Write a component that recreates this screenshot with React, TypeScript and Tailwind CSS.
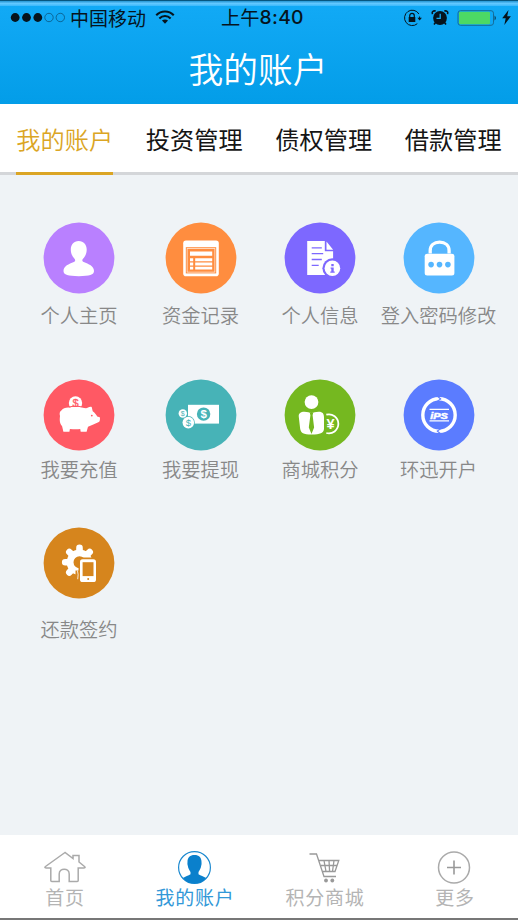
import type { ReactNode } from "react";

const tabs = ["我的账户", "投资管理", "债权管理", "借款管理"];

function Badge({ color, children }: { color: string; children: ReactNode }) {
  return (
    <svg className="h-[72px] w-[72px] shrink-0" viewBox="-36 -36 72 72" fill="#fff">
      <circle r="35.4" fill={color} />
      {children}
    </svg>
  );
}

function Coin({ x, y, r, color, size }: { x: number; y: number; r: number; color: string; size: number }) {
  return (
    <>
      <circle cx={x} cy={y} r={r} />
      <text x={x} y={y + size * 0.36} fill={color} fontSize={size} textAnchor="middle" fontFamily="Liberation Sans, sans-serif">
        $
      </text>
    </>
  );
}

const items: { label: string; icon: ReactNode }[] = [
  {
    label: "个人主页",
    icon: (
      <Badge color="#b980ff">
        <path d="M-.3-17c5 0 8 3.600 8 8.600 0 4-1.500 7-3.700 9.100-1.100 1.100-.9 2.600.7 3.400 4.800 2 10.300 3.900 10.300 9 0 3.800-4.500 5.100-15.200 5.100s-15.300-1.300-15.300-5.100c0-5.100 5.500-7 10.300-9 1.600-.8 1.800-2.300.7-3.400C-6.700-1.400-8.200-4.400-8.200-8.400c0-5 2.900-8.600 7.900-8.600z" />
      </Badge>
    ),
  },
  {
    label: "资金记录",
    icon: (
      <Badge color="#ff8d3f">
        <rect x="-17.800" y="-17.500" width="35.600" height="35.700" rx="2.800" />
        <path fill="#ff8d3f" d="M-15.200-10.800h30.400v26.200h-30.400z" />
        <path d="M-14.200-9.800h28.400v24.200h-28.400z" />
        <path fill="#ff8d3f" d="M-13.600-9.200h27.200v23h-27.200z" />
        <path d="M-11-6.500h22.200v4.200H-11zM-11 .3h3.200v2.900H-11zM-5.800.3h17v2.900h-17zM-11 4.600h3.200v2.800H-11zM-5.800 4.600h17v2.800h-17zM-11 8.800h3.200v2.700H-11zM-5.800 8.800h17v2.700h-17z" />
      </Badge>
    ),
  },
  {
    label: "个人信息",
    icon: (
      <Badge color="#7d68ff">
        <path d="M-12.800-17H4.800v10.300h8.300V17h-25.900z" />
        <path d="M6.500-16.600l6.600 8.300H6.500z" />
        <path d="M-8.300-10.200H1.800M-8.300-4.300H3.200M-8.300 1.500H1.800M-8.300 7.300h7" stroke="#7d68ff" strokeWidth="1.300" />
        <circle cx="12.400" cy="10.200" r="10" fill="#7d68ff" />
        <circle cx="12.400" cy="10.200" r="7.800" />
        <path fill="#7d68ff" d="M11.300 6h2.400v2.200h-2.400zM10.600 9.400h3.100v4h1v1.400h-4.400v-1.400h1v-2.600h-.7z" />
      </Badge>
    ),
  },
  {
    label: "登入密码修改",
    icon: (
      <Badge color="#55b6ff">
        <rect x="-14.300" y="-4.200" width="29.700" height="21.600" rx="2.500" />
        <path d="M-8.800-4.500v-2.700C-8.800-12.500-5-15.800.6-15.800s9.500 3.300 9.500 8.600v2.700" fill="none" stroke="#fff" strokeWidth="3.300" />
        <g fill="#55b6ff">
          <circle cx="-7.900" cy="6.600" r="2.800" />
          <circle cx=".5" cy="6.600" r="2.800" />
          <circle cx="8.900" cy="6.600" r="2.800" />
        </g>
      </Badge>
    ),
  },
  {
    label: "我要充值",
    icon: (
      <Badge color="#ff5964">
        <circle cx="-3.500" cy="-12" r="6.700" />
        <text x="-3.500" y="-8.200" fill="#ff5964" stroke="#ff5964" strokeWidth=".3" fontSize="11" textAnchor="middle" fontFamily="Liberation Sans, sans-serif">$</text>
        <path d="M-11-5.800q7.500-2.300 15.500 0" fill="none" stroke="#ff5964" strokeWidth="1.200" transform="translate(0 -1.800)" />
        <path d="M-17.900-4.200c2-2.600 5-3.500 8.600-3.100 3.300-.9 8.300-.9 12.200-.1C5.500-7 7.500-6.300 9-7.400c1.600-1 2.700-1 3.700-.6l1 4.300c2.300 1.800 3.800 3.600 4.500 5.200l2.600.7c.5 2.100 0 4.600-1.500 5.100-3.300 1.300-6.600 3-10.300 4.500L7.600 16.800H1.700l-.5-2.700c-3.200.4-6.800.3-10.300-.2l-.5 2.900h-6l-1.300-5.500c-2.500-3.200-2.600-6-2.100-10.300-.7-2.300-.3-4.800 1.100-5.200z" />
        <circle cx="12.800" cy=".6" r=".9" fill="#ff5964" />
      </Badge>
    ),
  },
  {
    label: "我要提现",
    icon: (
      <Badge color="#47b3b7">
        <path d="M-13-10.200h31v18.800h-31z" />
        <circle cx="2.600" cy="-.9" r="6.700" fill="#47b3b7" />
        <text x="2.600" y="3" fontSize="11.500" fontWeight="700" textAnchor="middle" fontFamily="Liberation Sans, sans-serif">$</text>
        <circle cx="-12.700" cy="7.600" r="6.500" fill="#47b3b7" />
        <Coin x={-18.200} y={-1.500} r={4.200} color="#47b3b7" size={7} />
        <Coin x={-12.700} y={7.600} r={5.800} color="#47b3b7" size={9.500} />
      </Badge>
    ),
  },
  {
    label: "商城积分",
    icon: (
      <Badge color="#75b820">
        <circle cx="-8.500" cy="-12.900" r="6.900" />
        <path d="M-15.700-3.300c3.500 0 5 1.200 7.200 1.200s3.700-1.200 7.200-1.200C3-3.300 4-1 4 2.500v11.300c-.2 4.300-4 5.700-12.300 5.700-8.700 0-10.700-1.600-11.500-5.500L-21.200 2c-.5-3.800 2-5.300 5.500-5.300z" />
        <path fill="#75b820" d="M-10.200-2.200h3.400l-.6 2.500 1.500 12.200-2.600 6.400-2.700-6.400 1.600-12.200z" />
        <path d="M6.300-.3A9.500 9.500 0 1 1 6.300 18" fill="none" stroke="#fff" strokeWidth="1.800" />
        <text x="10.500" y="14.200" fontSize="14.500" fontWeight="700" textAnchor="middle" fontFamily="Liberation Sans, sans-serif">¥</text>
      </Badge>
    ),
  },
  {
    label: "环迅开户",
    icon: (
      <Badge color="#5b7cff">
        <circle r="16.200" fill="none" stroke="#fff" strokeWidth="3.400" />
        <path d="M-1.800-19l3.500 3-4 2.600M1.800 19l-3.500-3 4-2.600" fill="none" stroke="#5b7cff" strokeWidth="1.100" />
        <path d="M-9.500-5.600H10M-9.500 5.900H10" stroke="#fff" strokeWidth="1.200" />
        <text x="-8.800" y="3.500" fontSize="9.700" fontWeight="700" fontStyle="italic" stroke="#fff" strokeWidth=".5" textLength="17.600" lengthAdjust="spacingAndGlyphs" fontFamily="Liberation Sans, sans-serif">iPS</text>
      </Badge>
    ),
  },
  {
    label: "还款签约",
    icon: (
      <Badge color="#d6851d">
        <g transform="translate(.5 -.8)">
          <path d="M0-12v-2.300M0 12v2.300M-12 0h-2.300M-8.500-8.500l-1.700-1.700M8.500-8.500l1.700-1.700M-8.500 8.500l-1.700 1.700" stroke="#fff" strokeWidth="6.600" strokeLinecap="round" />
          <circle r="9.400" fill="none" stroke="#fff" strokeWidth="6.800" />
        </g>
        <path fill="#d6851d" d="M-.5 0c0-4 1.500-5.500 5.500-5.500h15V22H-.5z" />
        <path d="M-3.500 7.500v14h6v-14z" fill="#d6851d" />
        <path d="M-1.600 7.500q1.300 4 .3 8.700" fill="none" stroke="#fff" strokeWidth=".8" />
        <rect x="1" y="-3.800" width="16" height="22.800" rx="2.600" />
        <path fill="#d6851d" d="M3.600-.8h10.900v13.900H3.600z" />
        <circle cx="9.200" cy="16" r="1" fill="#d6851d" />
      </Badge>
    ),
  },
];

const navItems: { label: string; active?: boolean; icon: ReactNode }[] = [
  {
    label: "首页",
    icon: (
      <path d="M21 1.500L1.500 15.500q-1.500 1.500 1 1.500h4.300v12.500q0 1 1 1h7.400V23c0-6.500 10-6.500 10 0v7.500h8q1 0 1-1V17h5.300q2.500 0 1-1.500L35 11V4.500h-6v3z" stroke="#aaa" strokeWidth="1.500" />
    ),
  },
  {
    label: "我的账户",
    active: true,
    icon: (
      <>
        <circle cx="20.500" cy="16.500" r="15.900" stroke="#1a88cf" strokeWidth="1.200" />
        <path d="M20.500 4c4.500 0 7 2.500 7 6.700 0 1.500.3 2-.3 4-.4 3-1.700 4.500-2.700 6.300v2.200c2.200 1.500 5 2.200 7.700 3.800-3.200 4-7.200 5.500-11.700 5.500S12 31 8.800 27c2.700-1.600 5.500-2.300 7.700-3.800V21c-1-1.800-2.300-3.300-2.700-6.300-.6-2-.3-2.500-.3-4 0-4.200 2.500-6.700 7-6.700z" fill="#0a80cc" />
      </>
    ),
  },
  {
    label: "积分商城",
    icon: (
      <g stroke="#999" strokeWidth="1.300">
        <path d="M5.500 3h7l7.500 22.500h12M14.800 9.500h20L31 20.500H18.500M17 14.500h16M20 9.500l2 11M25 9.500l.6 11M30 9.500l-1.500 11" />
        <circle cx="22" cy="29.500" r="1.900" fill="#999" stroke="none" />
        <circle cx="28.300" cy="29.500" r="1.900" fill="#999" stroke="none" />
      </g>
    ),
  },
  {
    label: "更多",
    icon: (
      <>
        <circle cx="20" cy="16.500" r="15.500" stroke="#aaa" strokeWidth="1.500" />
        <path d="M20 9.500v14M13 16.500h14" stroke="#999" strokeWidth="1.600" />
      </>
    ),
  },
];

function StatusBar() {
  return (
    <div className="grid h-[34px] grid-cols-[221px_1fr_auto] items-center pr-[7px] text-[19px] leading-none text-[#06141d]">
      <div className="-mt-[2px] flex items-center pl-[10px]">
        <svg className="mr-[4px] h-[11px] w-[56px]" viewBox="0 0 56 11" fill="#06141d">
          <circle cx="5.200" cy="5.500" r="4.400" />
          <circle cx="16.500" cy="5.500" r="4.400" />
          <circle cx="27.800" cy="5.500" r="4.400" />
          <g fill="none" stroke="#0a4a70" strokeWidth=".7">
            <circle cx="39" cy="5.500" r="4.200" />
            <circle cx="50.300" cy="5.500" r="4.200" />
          </g>
        </svg>
        <span>中国移动</span>
        <svg className="ml-[9px] h-[16px] w-[20px]" viewBox="0 0 21 16" fill="none" stroke="#06141d" strokeWidth="2.200">
          <path d="M1.300 6.200c5.200-5.300 13.200-5.300 18.400 0M4.600 9.500c3.300-3.300 8.500-3.300 11.800 0" />
          <path d="M10.500 15l-3.200-3.200c1.800-1.600 4.600-1.600 6.400 0z" fill="#06141d" stroke="none" />
        </svg>
      </div>
      <div className="flex items-center">
        <span className="text-[19.3px]">上午</span>
        <span className="font-[Inter,sans-serif] text-[19.3px] font-medium tracking-[0.3px]">8:40</span>
      </div>
      <div className="-mt-[1px] flex items-center">
        <svg className="h-[18px] w-[19px]" viewBox="0 0 19 18" fill="none" stroke="#06141d">
          <path d="M15.900 5A7.700 7.700 0 1 0 14.300 14.700M16.600 7.500v1.500" strokeWidth="1" />
          <path d="M14.400 8.700h4.500l-2.300 2.800z" fill="#06141d" stroke="none" />
          <path d="M6.700 8V6.700c0-3 4.600-3 4.600 0V8" strokeWidth="1.200" />
          <path d="M5.700 8h6.600v5H5.700z" fill="#06141d" stroke="none" />
        </svg>
        <svg className="ml-[9px] h-[17px] w-[18px]" viewBox="0 0 18 17" fill="#06141d">
          <circle cx="9" cy="9" r="6.900" />
          <path d="M1.600 5.200C.5 3 2.200 1.400 4.700 2M16.400 5.200c1.100-2.200-.6-3.800-3.100-3.200M4.500 13.500L3 15.500M13.500 13.500l1.500 2" fill="none" stroke="#06141d" strokeWidth="1.600" />
          <path d="M9.200 4.800v4.500H5.500" fill="none" stroke="#16aaf2" strokeWidth="1.300" />
        </svg>
        <svg className="ml-[8px] h-[16px] w-[40px]" viewBox="0 0 40 16">
          <rect x="1" y=".7" width="35.500" height="14.600" rx="2.500" fill="none" stroke="#176b97" strokeWidth="1" />
          <rect x="2" y="1.700" width="31" height="12.600" rx="1.200" fill="#4cd964" />
          <path d="M37.700 5.500q1.900 2.500 0 5z" fill="#06141d" />
        </svg>
        <svg className="ml-[5px] h-[15px] w-[9px]" viewBox="0 0 9 15" fill="#06141d">
          <path d="M6.500 0L.2 8.300h3.500L2.300 15 8.900 6.200H5.200z" />
        </svg>
      </div>
    </div>
  );
}

export default function App() {
  return (
    <div className="flex h-[920px] w-[518px] flex-col overflow-hidden bg-[#eff3f6] font-['Noto_Sans_CJK_SC',sans-serif]">
      <header className="h-[104px] shrink-0 border-t border-[#075780] bg-linear-to-b from-[#12aaf6] to-[#039de8]">
        <div className="-mb-[5px] h-[5px] bg-linear-to-b from-[#2196d3] via-[#62c8ff] to-[#38b9fc]" />
        <StatusBar />
        <h1 className="-ml-[2px] text-center text-[34.7px] leading-[67px] font-[350] text-white">我的账户</h1>
      </header>

      <nav className="grid h-[71px] shrink-0 grid-cols-4 bg-white text-[24.2px] text-[#151515]">
        {tabs.map((tab, i) => (
          <div key={tab} className="flex h-[71px] justify-center border-b-[3px] border-[#d4d6d9]">
            <span
              className={
                i === 0
                  ? "h-[71px] border-b-[3px] border-[#dba524] leading-[70px] font-[350] whitespace-nowrap text-[#dba524]"
                  : "leading-[70px] whitespace-nowrap"
              }
            >
              {tab}
            </span>
          </div>
        ))}
      </nav>

      <main className="grid flex-1 grid-cols-[121px_122px_117px_120px] grid-rows-[157px_148px_120px] content-start px-[18.5px] pt-[46.5px] text-[19.3px] font-[350] text-[#888]">
        {items.map((item, i) => (
          <div key={item.label} className="flex flex-col items-center">
            {item.icon}
            <span
              className={
                i < 4
                  ? "mt-[6px] leading-[30px] whitespace-nowrap"
                  : i < 8
                    ? "mt-[3px] leading-[30px] whitespace-nowrap"
                    : "mt-[15px] leading-[30px] whitespace-nowrap"
              }
            >
              {item.label}
            </span>
          </div>
        ))}
      </main>

      <footer className="grid h-[85px] shrink-0 grid-cols-[130px_130px_130px_130px] border-b-2 border-[#777] bg-white pt-[16px] text-[19px] tracking-[0.8px] text-[#b4b4b4]">
        {navItems.map((item) => (
          <div key={item.label} className={item.active ? "flex flex-col items-center text-[#3298d8]" : "flex flex-col items-center"}>
            <svg className="h-[33px] w-[42px]" viewBox="0 0 42 33" fill="none">
              {item.icon}
            </svg>
            <span className="leading-[26px]">{item.label}</span>
          </div>
        ))}
      </footer>
    </div>
  );
}
